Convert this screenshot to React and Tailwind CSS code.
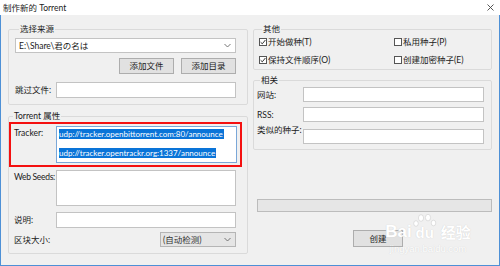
import React from "react";

const Chk = ({ checked }) => (
  <svg width="8" height="8" viewBox="0 0 8 8" className="shrink-0">
    <rect x="0.5" y="0.5" width="7" height="7" fill="#fff" stroke="#555" strokeWidth="1" />
    {checked && <path d="M1.6 4.2 L3.3 5.8 L6.4 2" fill="none" stroke="#333" strokeWidth="1" />}
  </svg>
);

const Chevron = () => (
  <svg width="7" height="5" viewBox="0 0 7 5" className="shrink-0">
    <path d="M0.5 1 L3.5 4 L6.5 1" fill="none" stroke="#666" strokeWidth="0.9" />
  </svg>
);

const Input = ({ className = "" }) => (
  <div className={"bg-white border border-[#c3c3c3] " + className} />
);

export default function App() {
  return (
    <div className="w-[500px] h-[266px] bg-[#f0f0f0] font-['Lato','Noto_Sans_CJK_SC',sans-serif] text-[8.5px] leading-[12px] text-[#1a1a1a] overflow-hidden relative whitespace-nowrap">
      {/* title bar */}
      <div className="h-[15px] bg-white flex items-center justify-between pl-[3px] pr-[6px]">
        <span className="text-[8.5px] leading-[12px] text-[#222]">制作新的 Torrent</span>
        <svg width="7" height="7" viewBox="0 0 7 7">
          <path d="M0.5 0.5 L6.5 6.5 M6.5 0.5 L0.5 6.5" stroke="#444" strokeWidth="0.9" />
        </svg>
      </div>
      {/* body */}
      <div className="h-[251px] border-l border-r border-b border-[#4d90d6] flex pl-[7px] pt-[8px] gap-[5px]">
        {/* left column */}
        <div className="w-[240px] flex flex-col">
          <fieldset className="border border-[#dadada] rounded-[2px] pl-[6px] pr-[11px] pt-[3px] pb-[6px] min-w-0">
            <legend className="ml-[4px] px-[1px] leading-[12px]">选择来源</legend>
            <div className="h-[15px] bg-white border border-[#c3c3c3] flex items-center justify-between pl-[3px] pr-[4px]">
              <span>E:\Share\君の名は</span>
              <Chevron />
            </div>
            <div className="mt-[5px] flex justify-end gap-[7px]">
              <div className="w-[55px] h-[16px] bg-[#e1e1e1] border border-[#adadad] flex items-center justify-center">添加文件</div>
              <div className="w-[55px] h-[16px] bg-[#e1e1e1] border border-[#adadad] flex items-center justify-center">添加目录</div>
            </div>
            <div className="mt-[8px] flex items-center">
              <span className="w-[41px] shrink-0">跳过文件:</span>
              <Input className="flex-1 h-[16px]" />
            </div>
          </fieldset>
          <fieldset className="mt-[5px] border border-[#dadada] rounded-[2px] pl-0 pr-[5px] pt-0 pb-[6px] min-w-0">
            <legend className="ml-[4px] px-[1px] leading-[12px]">Torrent 属性</legend>
            <div className="border-2 border-[#f41010] pl-[3px] pr-[3px] py-[2px] flex items-start">
              <span className="w-[42px] shrink-0 mt-[1px]">Tracker:</span>
              <div className="flex-1 h-[37px] bg-white border border-[#7aa7d8] pl-[2px] pt-[1px] text-white text-[8px] overflow-hidden">
                <div className="h-[12px] leading-[12px]"><span className="bg-[#0a74d8] pr-[1px]">udp://tracker.openbittorrent.com:80/announce</span></div>
                <div className="mt-[7px] h-[12px] leading-[12px]"><span className="bg-[#0a74d8] pr-[1px]">udp://tracker.opentrackr.org:1337/announce</span></div>
              </div>
            </div>
            <div className="pl-[5px] pr-[6px]">
              <div className="mt-[3px] flex items-start">
                <span className="w-[42px] shrink-0 mt-[1px] tracking-[-0.3px]">Web Seeds:</span>
                <Input className="flex-1 h-[36px]" />
              </div>
              <div className="mt-[6px] flex items-center">
                <span className="w-[42px] shrink-0">说明:</span>
                <Input className="flex-1 h-[16px]" />
              </div>
              <div className="mt-[4px] flex items-center justify-between">
                <span>区块大小:</span>
                <div className="w-[76px] h-[15px] bg-[#e5e5e5] border border-[#b5b5b5] flex items-center justify-between pl-[2px] pr-[4px] text-[#333]">
                  <span>(自动检测)</span>
                  <Chevron />
                </div>
              </div>
            </div>
          </fieldset>
        </div>
        {/* right column */}
        <div className="w-[239px] flex flex-col">
          <fieldset className="border border-[#dadada] rounded-[2px] pl-[5px] pr-0 pt-[1px] pb-[3px] min-w-0">
            <legend className="ml-[3px] px-[1px] leading-[12px]">其他</legend>
            <div className="grid grid-cols-[135px_1fr] gap-y-[6px]">
              <div className="h-[12px] flex items-center gap-[1px]"><Chk checked /><span>开始做种(T)</span></div>
              <div className="h-[12px] flex items-center gap-[1px]"><Chk /><span>私用种子(P)</span></div>
              <div className="h-[12px] flex items-center gap-[1px]"><Chk checked /><span>保持文件顺序(O)</span></div>
              <div className="h-[12px] flex items-center gap-[1px]"><Chk /><span>创建加密种子(E)</span></div>
            </div>
          </fieldset>
          <fieldset className="mt-[4px] border border-[#dadada] rounded-[2px] pl-[3px] pr-[7px] pt-0 pb-[5px] min-w-0">
            <legend className="ml-[3px] px-[1px] leading-[12px]">相关</legend>
            <div className="mt-[1px] flex items-center">
              <span className="w-[46px] shrink-0">网站:</span>
              <Input className="flex-1 h-[15px]" />
            </div>
            <div className="mt-[5px] flex items-center">
              <span className="w-[46px] shrink-0">RSS:</span>
              <Input className="flex-1 h-[15px]" />
            </div>
            <div className="mt-[2px] flex items-start">
              <span className="w-[46px] shrink-0 leading-[12px]">类似的种子:</span>
              <Input className="flex-1 h-[15px] mt-[5px]" />
            </div>
          </fieldset>
          <div className="mt-[49px] ml-[4px] w-[235px] h-[13px] bg-[#e6e6e6] border border-[#bcbcbc]" />
          <div className="mt-[18px] ml-[100px] w-[50px] h-[17px] bg-[#e1e1e1] border border-[#adadad] flex items-center justify-center">创建</div>
        </div>
      </div>
      {/* Baidu watermark overlay */}
      <div className="absolute left-[383px] top-[210px] w-[90px] flex flex-col items-center text-white [text-shadow:0_0_1px_#c8c8c8] pointer-events-none">
        <div className="flex items-end h-[30px]">
          <span className="font-['Liberation_Sans',sans-serif] font-bold text-[17px] leading-[17px]">Bai</span>
          <div className="flex flex-col items-center w-[26px]">
            <svg width="24" height="13" viewBox="0 0 24 13">
              <g fill="#fff" stroke="#cdcdcd" strokeWidth="0.6">
                <ellipse cx="8" cy="4" rx="2.6" ry="3.3" />
                <ellipse cx="15" cy="3.6" rx="2.6" ry="3.3" />
                <ellipse cx="3" cy="9.5" rx="2.3" ry="2.8" />
                <ellipse cx="20.5" cy="9" rx="2.3" ry="2.8" />
              </g>
            </svg>
            <span className="font-['Liberation_Sans',sans-serif] font-bold text-[15px] leading-[15px] mt-[-2px]">du</span>
          </div>
          <span className="ml-[3px] text-[15px] leading-[17px] font-bold font-['Noto_Sans_CJK_SC',sans-serif]">经验</span>
        </div>
        <span className="text-[9.5px] leading-[12px] mt-[3px] font-['Liberation_Sans',sans-serif]">jingyan.baidu.com</span>
      </div>
    </div>
  );
}
